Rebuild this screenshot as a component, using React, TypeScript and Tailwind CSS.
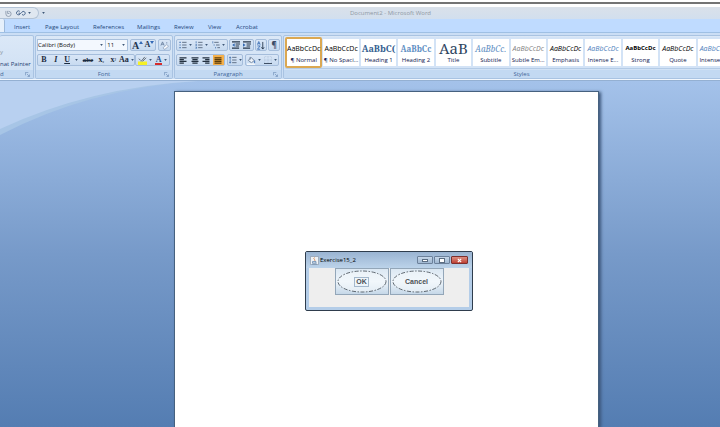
import type { ReactNode } from "react";

const tabs = [
  { name: "Insert", width: "w-[16px]" },
  { name: "Page Layout", width: "w-[33px]" },
  { name: "References", width: "w-[29px]" },
  { name: "Mailings", width: "w-[22px]" },
  { name: "Review", width: "w-[19px]" },
  { name: "View", width: "w-[13px]" },
  { name: "Acrobat", width: "w-[21px]" },
];

const serif = "font-['Noto_Serif','Liberation_Serif',serif]";

const styles = [
  { name: "¶ Normal", sample: "AaBbCcDc", look: "text-[7px] text-black" },
  { name: "¶ No Spaci...", sample: "AaBbCcDc", look: "text-[7px] text-black" },
  { name: "Heading 1", sample: "AaBbC(", look: `${serif} text-[9px] font-bold text-[#365f91]` },
  { name: "Heading 2", sample: "AaBbCc", look: `${serif} text-[8px] font-bold text-[#5f8fc4]` },
  { name: "Title", sample: "AaB", look: `${serif} text-[15px] text-[#2f455f]` },
  { name: "Subtitle", sample: "AaBbCc.", look: `${serif} text-[8px] italic text-[#5f8fc4]` },
  { name: "Subtle Em...", sample: "AaBbCcDc", look: "text-[7px] italic text-[#808080]" },
  { name: "Emphasis", sample: "AaBbCcDc", look: "text-[7px] italic text-black" },
  { name: "Intense E...", sample: "AaBbCcDc", look: "text-[7px] italic text-[#4f81bd]" },
  { name: "Strong", sample: "AaBbCcDc", look: "text-[6px] font-bold text-black" },
  { name: "Quote", sample: "AaBbCcDc", look: "text-[7px] italic text-black" },
  { name: "Intense Q...", sample: "AaBbCcDc", look: "text-[7px] italic text-[#4f81bd]" },
];

function Caret() {
  return (
    <svg viewBox="0 0 4 3" className="h-[2px] w-[3px] shrink-0" aria-hidden="true">
      <path d="M0 0h4L2 3z" fill="#3f5878" />
    </svg>
  );
}

function Cluster({ children, className = "" }: { children: ReactNode; className?: string }) {
  return (
    <div
      className={`flex h-[12px] items-center justify-around rounded-[2px] border border-[#a5bddb] bg-linear-to-b from-[#d9e6f6] to-[#c7daf0] ${className}`}
    >
      {children}
    </div>
  );
}

function Tool({ label, children, className = "" }: { label: string; children: ReactNode; className?: string }) {
  return (
    <button
      type="button"
      aria-label={label}
      className={`flex h-[10px] items-center justify-center gap-[2px] whitespace-nowrap ${className}`}
    >
      {children}
    </button>
  );
}

function Lines({ kind }: { kind: "left" | "center" | "right" | "justify" }) {
  const d = {
    left: "M0 1h8M0 3h5M0 5h8M0 7h5",
    center: "M0 1h8M1 3h6M0 5h8M1 7h6",
    right: "M0 1h8M3 3h5M0 5h8M3 7h5",
    justify: "M0 1h8M0 3h8M0 5h8M0 7h8",
  }[kind];
  return (
    <svg viewBox="0 0 8 8" className="h-[7px] w-[8px]" aria-hidden="true">
      <path d={d} stroke={kind === "justify" ? "#593b08" : "#23303f"} strokeWidth="1.4" />
    </svg>
  );
}

function ListIcon({ kind }: { kind: "bullet" | "number" | "multi" | "spacing" }) {
  return (
    <svg viewBox="0 0 9 9" className="h-[8px] w-[8px]" fill="none" aria-hidden="true">
      {kind === "multi" ? (
        <path d="M2.5 1.5h5M4.5 4.5h4M6 7.5h3" stroke="#56677c" />
      ) : (
        <path d="M3.5 1.5h5M3.5 4.5h5M3.5 7.5h5" stroke="#56677c" />
      )}
      {kind === "bullet" && <path d="M.5 1.5h1.4M.5 4.5h1.4M.5 7.5h1.4" stroke="#3d6cab" strokeWidth="1.4" />}
      {kind === "number" && <path d="M1.3.3v2.4M.6 4h1.2v1H.6M.6 6.8h1.2v1.4H.6" stroke="#3d6cab" strokeWidth=".8" />}
      {kind === "multi" && <path d="M.9.3v2.4M2.4 3.7v1.6M4 6.7v1.6" stroke="#3d6cab" strokeWidth=".8" />}
      {kind === "spacing" && <path d="M1.3 1v7M.2 2.4 1.3.9l1.1 1.5M.2 6.6l1.1 1.5 1.1-1.5" stroke="#3d6cab" strokeWidth=".8" />}
    </svg>
  );
}

function IndentIcon({ flip = false }: { flip?: boolean }) {
  return (
    <svg viewBox="0 0 9 9" className="h-[8px] w-[8px]" fill="none" aria-hidden="true">
      <path d="M0 1h9M4 3.3h5M4 5.6h4M0 8h8" stroke="#26364a" strokeWidth="1.2" />
      <path d={flip ? "M0 2.6v3.8l2.8-1.9z" : "M3 2.6v3.8L.2 4.5z"} fill="#3268b2" />
    </svg>
  );
}

function Launcher() {
  return (
    <svg viewBox="0 0 6 6" className="absolute right-[3px] h-[5px] w-[5px]" fill="none" aria-hidden="true">
      <path d="M.5 4V.5H4M2.3 2.3 5 5M5.4 3v2.4H3" stroke="#6d8db5" strokeWidth=".8" />
    </svg>
  );
}

function Group({
  title,
  children,
  className = "",
  titleClass = "justify-center",
  launcher = true,
}: {
  title: string;
  children: ReactNode;
  className?: string;
  titleClass?: string;
  launcher?: boolean;
}) {
  return (
    <section
      className={`flex shrink-0 flex-col justify-between overflow-hidden rounded-[2px] border border-[#a9c3e2] bg-linear-to-b from-[#dbe8f7] to-[#cfe0f4] ${className}`}
    >
      {children}
      <div className={`relative flex h-[8px] items-center bg-[#c3d9f2] text-[6px] leading-[8px] text-[#3f6699] ${titleClass}`}>
        <h2>{title}</h2>
        {launcher && <Launcher />}
      </div>
    </section>
  );
}

function TitleBar() {
  return (
    <header className="flex h-[12px] items-center bg-linear-to-b from-[#dae1ea] to-[#d2dfee]">
      <div className="flex h-[12px] w-[39px] items-center justify-end gap-[4px] rounded-r-full border border-l-0 border-[#b3c3d6] bg-[#dfe7f0] pr-[7px]">
        <Tool label="Repeat">
          <svg viewBox="0 0 8 8" className="h-[7px] w-[7px]" fill="none" aria-hidden="true">
            <path d="M1 1v3.4a3 3 0 0 0 6 0A3 3 0 0 0 4 1.5M3 1v3h2" stroke="#8c99ab" />
          </svg>
        </Tool>
        <Tool label="Preview">
          <svg viewBox="0 0 12 7" className="h-[6px] w-[10px]" fill="none" aria-hidden="true">
            <path d="M4.5 1.5a2.4 2.4 0 1 0 .6 3L7 2.6a2.2 2.2 0 1 1 .2 2.6M3 3.8h2" stroke="#35547e" />
          </svg>
          <Caret />
        </Tool>
      </div>
      <div className="ml-[3px]">
        <Caret />
      </div>
      <h1 className="flex-1 pl-[16px] text-center text-[6px] text-[#8f98a4]">Document2 - Microsoft Word</h1>
    </header>
  );
}

function FontGroup() {
  return (
    <Group title="Font" className="w-[138px]">
      <div className="flex flex-col gap-[3px] px-[1px] pt-[3px]">
        <div className="flex items-center gap-[2px]">
          <div className="flex h-[12px] w-[92px] border border-[#a9c0dc] bg-[#f3f8fe]">
            <div className="relative flex flex-1 items-center">
              <select aria-label="Font" className="w-full appearance-none text-[6px] leading-[9px] text-[#111]">
                <option>Calibri (Body)</option>
              </select>
              <span className="pointer-events-none absolute right-[2px] flex">
                <Caret />
              </span>
            </div>
            <div className="relative flex w-[22px] items-center border-l border-[#b9cde5] pl-[1px]">
              <select aria-label="Font size" className="w-full appearance-none text-[6px] leading-[9px] text-[#111]">
                <option>11</option>
              </select>
              <span className="pointer-events-none absolute right-[2px] flex">
                <Caret />
              </span>
            </div>
          </div>
          <Cluster className="w-[26px] font-['Liberation_Serif',serif] text-[#24364e]">
            <Tool label="Grow font" className="text-[10px] font-bold">
              <span>A</span>
              <svg viewBox="0 0 4 3" className="-ml-[2px] mb-[5px] h-[3px] w-[4px]" aria-hidden="true">
                <path d="M0 3h4L2 0z" fill="#3369b5" />
              </svg>
            </Tool>
            <Tool label="Shrink font" className="text-[8px] font-bold">
              <span>A</span>
              <svg viewBox="0 0 4 3" className="-ml-[2px] mb-[5px] h-[3px] w-[4px]" aria-hidden="true">
                <path d="M0 0h4L2 3z" fill="#3369b5" />
              </svg>
            </Tool>
          </Cluster>
          <Cluster className="w-[13px]">
            <Tool label="Clear formatting">
              <svg viewBox="0 0 10 10" className="h-[9px] w-[9px]" fill="none" aria-hidden="true">
                <path d="m1 5 1.800-4L4.600 5M1.600 3.600H4" stroke="#637a99" strokeWidth=".9" />
                <path d="M3.500 7.500 7.500 4l2 1.800-4 3.400H4.500z" stroke="#8a9db9" strokeWidth=".8" fill="#f8fafd" />
                <path d="M7.500 1.200v1.600" stroke="#7d92b1" />
              </svg>
            </Tool>
          </Cluster>
        </div>
        <div className="flex items-center">
          <Cluster className="w-[98px] font-['Liberation_Serif',serif] text-[8px] font-bold text-[#1c2b40]">
            <Tool label="Bold" className="w-[11px]">B</Tool>
            <Tool label="Italic" className="w-[11px] italic">I</Tool>
            <Tool label="Underline" className="w-[18px]">
              <span className="underline">U</span>
              <span className="pl-[3px]"><Caret /></span>
            </Tool>
            <Tool label="Strikethrough" className="w-[14px] text-[7px] line-through">abe</Tool>
            <Tool label="Subscript" className="w-[11px]">
              <span>x<span className="text-[5px]">₂</span></span>
            </Tool>
            <Tool label="Superscript" className="w-[11px]">
              <span>x<span className="text-[5px]">²</span></span>
            </Tool>
            <Tool label="Change case" className="w-[14px]">
              <span>Aa</span>
              <Caret />
            </Tool>
          </Cluster>
          <Cluster className="w-[35px]">
            <Tool label="Highlight">
              <svg viewBox="0 0 10 10" className="h-[9px] w-[9px]" fill="none" aria-hidden="true">
                <path d="M0 6h10v4H0z" fill="#f5f026" />
                <path d="m3.500 6 4-5M1 3l2 2M5 6l4-4" stroke="#59626c" />
              </svg>
              <Caret />
            </Tool>
            <Tool label="Font color">
              <span className="border-b-[2px] border-[#d62c2c] px-[1px] font-['Liberation_Serif',serif] text-[8px] leading-[7px] font-bold text-[#274b85]">
                A
              </span>
              <Caret />
            </Tool>
          </Cluster>
        </div>
      </div>
    </Group>
  );
}

function ParagraphGroup() {
  return (
    <Group title="Paragraph" className="w-[108px]">
      <div className="flex flex-col gap-[3px] px-[1px] pt-[3px]">
        <div className="flex items-center gap-[1px]">
          <Cluster className="w-[52px]">
            <Tool label="Bullets"><ListIcon kind="bullet" /><Caret /></Tool>
            <Tool label="Numbering"><ListIcon kind="number" /><Caret /></Tool>
            <Tool label="Multilevel list"><ListIcon kind="multi" /><Caret /></Tool>
          </Cluster>
          <Cluster className="w-[25px]">
            <Tool label="Decrease indent"><IndentIcon /></Tool>
            <Tool label="Increase indent"><IndentIcon flip /></Tool>
          </Cluster>
          <Cluster className="w-[12px]">
            <Tool label="Sort">
              <svg viewBox="0 0 9 10" className="h-[9px] w-[8px]" fill="none" aria-hidden="true">
                <path d="m.5 4 1.500-3.500L3.500 4M1 3h2M.5 5.500h3L.5 9.200h3" stroke="#3268b2" strokeWidth=".9" />
                <path d="M6.500 1v8M5 7l1.500 2L8 7" stroke="#26364a" />
              </svg>
            </Tool>
          </Cluster>
          <Cluster className="w-[12px]">
            <Tool label="Show marks" className="text-[8px] font-bold text-[#3a4d66]">¶</Tool>
          </Cluster>
        </div>
        <div className="flex items-center gap-[2px]">
          <Cluster className="w-[49px]">
            <Tool label="Align left" className="w-[11px]"><Lines kind="left" /></Tool>
            <Tool label="Center" className="w-[11px]"><Lines kind="center" /></Tool>
            <Tool label="Align right" className="w-[11px]"><Lines kind="right" /></Tool>
            <Tool label="Justify" className="w-[11px] bg-[#f5b04a]"><Lines kind="justify" /></Tool>
          </Cluster>
          <Cluster className="w-[16px]">
            <Tool label="Line spacing"><ListIcon kind="spacing" /><Caret /></Tool>
          </Cluster>
          <Cluster className="w-[34px]">
            <Tool label="Shading">
              <svg viewBox="0 0 10 10" className="h-[9px] w-[9px]" fill="none" aria-hidden="true">
                <path d="m1.500 5 3-3.500L8 5 5 7.500zM3.500 1v3" stroke="#6b7f99" fill="#eef3fa" />
                <path d="M0 9h9" stroke="#fff" strokeWidth="1.500" />
                <path d="M8.500 5v3" stroke="#3268b2" />
              </svg>
              <Caret />
            </Tool>
            <Tool label="Borders">
              <svg viewBox="0 0 9 9" className="h-[8px] w-[8px]" fill="none" aria-hidden="true">
                <path d="M.5 1v7M8.500 1v7M1 .5h7M4.500 1v7M1 4.500h7" stroke="#9eb3ce" strokeDasharray="1 1" strokeWidth=".6" />
                <path d="M0 8.500h9" stroke="#26364a" />
              </svg>
              <Caret />
            </Tool>
          </Cluster>
        </div>
      </div>
    </Group>
  );
}

function StylesGroup() {
  return (
    <Group title="Styles" className="-mr-[40px] flex-1" launcher={false}>
      <div className="mt-[1px] mr-[25px] ml-[1px] grid h-[32px] grid-cols-12 rounded-[2px] border-b border-[#b4cbe6] bg-[#d3e3f6]">
        {styles.map((style, i) => (
          <button
            key={style.name}
            type="button"
            className={`flex min-w-0 flex-col items-center bg-white ${
              i === 0 ? "rounded-[2px] border-2 border-[#dba852] pt-[2px]" : "mx-[1px] my-[2px] pt-[2px]"
            }`}
          >
            <span className={`flex h-[15px] items-center justify-center leading-[15px] whitespace-nowrap ${style.look}`}>
              {style.sample}
            </span>
            <span className="text-[6px] leading-[8px] whitespace-nowrap text-[#10184f]">{style.name}</span>
          </button>
        ))}
      </div>
    </Group>
  );
}

function Ring() {
  return (
    <svg viewBox="0 0 51 25" className="absolute inset-0 h-full w-full" fill="none" aria-hidden="true">
      <ellipse cx="25.500" cy="12.500" rx="24" ry="10.500" fill="#f4f8fc" fillOpacity=".6" />
      <ellipse cx="25.500" cy="12.500" rx="24" ry="10.500" stroke="#3f4750" strokeWidth=".8" strokeDasharray="4 1.500 1.500 1.500" />
    </svg>
  );
}

function Dialog() {
  const caption =
    "flex h-[8px] items-center justify-center rounded-[1px] border border-[#6c819b] bg-linear-to-b from-[#c6d7e9] to-[#9fb7d1]";
  const action =
    "relative flex h-[27px] w-[54px] items-center justify-center border border-[#93a6b8] bg-linear-to-b from-[#dce8f3] via-[#edf4fa] to-[#c6d8e8] font-['Liberation_Sans',sans-serif] text-[7px] leading-[8px] font-bold text-[#4a4f55]";
  return (
    <div
      role="dialog"
      aria-label="Exercise15_2"
      className="absolute top-[170px] left-[305px] w-[168px] rounded-[2px] border border-[#2f3d4d] bg-[#b4cde8] px-[3px] pb-[3px]"
    >
      <div className="-mx-[3px] flex h-[16px] items-center gap-[1px] bg-linear-to-b from-[#9ab4d2] to-[#bcd3ea] px-[4px]">
        <svg viewBox="0 0 9 9" className="h-[9px] w-[9px]" fill="none" aria-hidden="true">
          <path d="M.5.500h8v8h-8z" fill="#eef2f6" stroke="#8c9aaa" strokeWidth=".7" />
          <path d="M4.500 1.500c-2 1.500 1.500 2 0 3.500" stroke="#d7722d" strokeWidth=".8" />
          <path d="M2.500 5.500h3.500v1.500h-3.500zM2 8h5" stroke="#5a7ea8" strokeWidth=".7" />
        </svg>
        <span className="flex-1 text-[6px] text-black">Exercise15_2</span>
        <div className="flex gap-[1px]">
          <button type="button" aria-label="Minimize" className={`w-[16px] ${caption}`}>
            <span className="h-[3px] w-[6px] border border-[#5b6d82] bg-white" />
          </button>
          <button type="button" aria-label="Maximize" className={`w-[16px] ${caption}`}>
            <span className="h-[5px] w-[6px] border border-[#5b6d82] bg-white" />
          </button>
          <button
            type="button"
            aria-label="Close"
            className="flex h-[8px] w-[17px] items-center justify-center rounded-[1px] border border-[#7d2f2d] bg-linear-to-b from-[#dc8f83] to-[#bd3d32]"
          >
            <svg viewBox="0 0 6 6" className="h-[5px] w-[5px]" aria-hidden="true">
              <path d="m1 1 4 4m0-4L1 5" stroke="#fff" strokeWidth="1.400" />
            </svg>
          </button>
        </div>
      </div>
      <div className="flex h-[39px] justify-center gap-[1px] bg-[#eeeeee]">
        <button type="button" className={action}>
          <Ring />
          <span className="relative border border-[#a4b8cc] px-[1px]">OK</span>
        </button>
        <button type="button" className={action}>
          <Ring />
          <span className="relative">Cancel</span>
        </button>
      </div>
    </div>
  );
}

export default function App() {
  return (
    <div className="flex min-h-screen flex-col overflow-hidden bg-white font-['Open_Sans','Noto_Sans',sans-serif]">
      <div className="mt-[2px] mb-[3px] h-[2px] bg-[#747474]" />
      <TitleBar />
      <nav className="flex h-[14px] gap-[15px] border-b border-[#9fc0e4] bg-[#bfdbff] text-[6px] leading-[16px] text-[#24477c]">
        <a href="#home" aria-label="Home" className="-mr-[6px] w-[5px] rounded-tr-[2px] border-r border-[#9db9da] bg-[#e6f0fb]" />
        {tabs.map((tab) => (
          <a key={tab.name} href={`#${tab.name}`} className={`whitespace-nowrap ${tab.width}`}>
            {tab.name}
          </a>
        ))}
      </nav>
      <div className="flex h-[47px] gap-[1px] border-b border-[#f2f7fd] bg-[#cbdef5] pt-[2px]">
        <Group title="d" titleClass="" className="w-[34px] border-l-0">
          <div className="flex flex-col items-start gap-[4px] pt-[12px] text-[6px] leading-[8px] whitespace-nowrap">
            <button type="button" className="text-[#8d99a8]">y</button>
            <button type="button" className="text-[#1f3f72]">nat Painter</button>
          </div>
        </Group>
        <FontGroup />
        <ParagraphGroup />
        <StylesGroup />
      </div>
      <main className="relative grid flex-1 grid-cols-[174fr_425fr_121fr] border-t border-[#94b0d2] bg-linear-to-b from-[#a4c2ea] via-[#779ac9] to-[#547db2]">
        <svg viewBox="0 0 200 56" className="absolute top-0 left-0 h-[56px] w-[200px]" aria-hidden="true">
          <path d="M0 0h198Q88 8 0 54z" fill="#a7c5e6" />
          <path d="M0 0h198Q90 6 0 48z" fill="#b8d0f0" />
        </svg>
        <article
          aria-label="Page"
          className="relative col-start-2 mt-[10px] border border-b-0 border-[#46617f] bg-white shadow-[2px_1px_3px_#3c567a]"
        />
        <Dialog />
      </main>
    </div>
  );
}
